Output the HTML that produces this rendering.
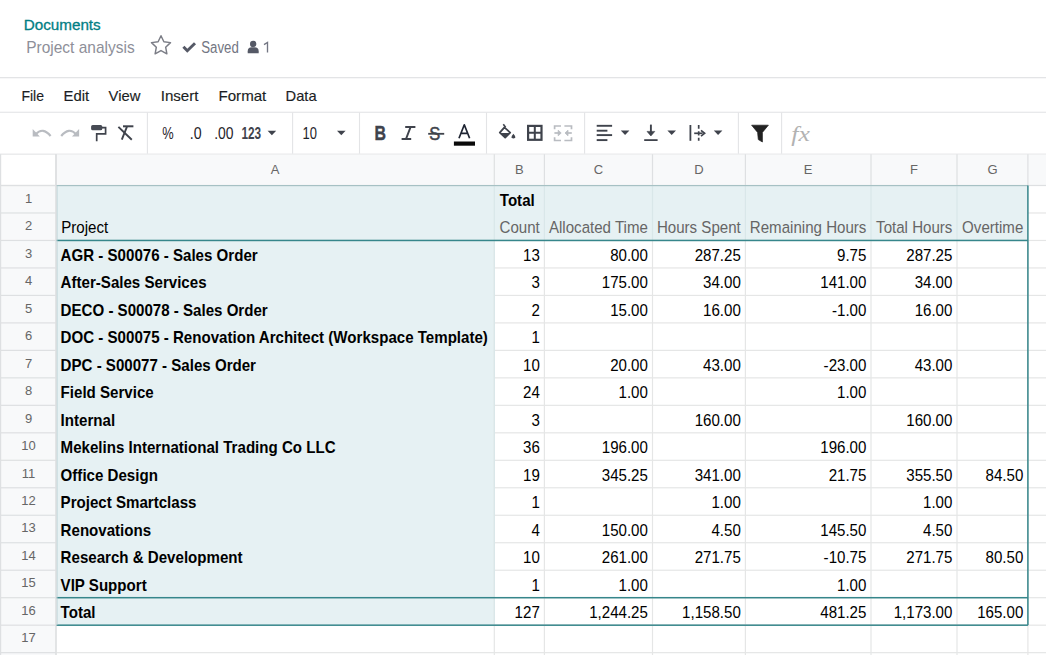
<!DOCTYPE html>
<html><head><meta charset="utf-8"><title>Project analysis</title>
<style>html,body{margin:0;padding:0;background:#fff;}body{width:1046px;height:655px;overflow:hidden;position:relative;}</style>
</head><body>
<svg width="1046" height="655" viewBox="0 0 1046 655" style="position:absolute;left:0;top:0;font-family:'Liberation Sans', sans-serif">
<rect x="0" y="0" width="1046" height="655" fill="#fff"/>
<text x="23.7" y="30.4" font-size="14.6" font-weight="400" fill="#017e84" stroke="#017e84" stroke-width="0.3" textLength="77" lengthAdjust="spacingAndGlyphs">Documents</text>
<text x="26.2" y="52.6" font-size="17" fill="#8e8f99" textLength="108.5" lengthAdjust="spacingAndGlyphs">Project analysis</text>
<polygon points="161.00,35.70 163.88,41.74 170.51,42.61 165.66,47.21 166.88,53.79 161.00,50.60 155.12,53.79 156.34,47.21 151.49,42.61 158.12,41.74" fill="none" stroke="#7b7d86" stroke-width="1.45" stroke-linejoin="round"/>
<path d="M183.4 46.7 L187.3 50.8 L195.0 43.2" fill="none" stroke="#555966" stroke-width="2.9"/>
<text x="201.2" y="52.6" font-size="15.6" fill="#737683" textLength="37.6" lengthAdjust="spacingAndGlyphs">Saved</text>
<circle cx="253.2" cy="43.9" r="3.2" fill="#555966"/>
<path d="M247.7 53.2 L247.7 51.2 Q247.7 47.3 251.8 47.3 L254.5 47.3 Q258.7 47.3 258.7 51.2 L258.7 53.2 Z" fill="#555966"/>
<path d="M264.0 44.6 L267.5 42.5 L267.5 52.6" fill="none" stroke="#737683" stroke-width="1.35" stroke-linejoin="miter"/>
<rect x="0" y="77" width="1046" height="1.3" fill="#e3e4e6"/>
<text x="21.4" y="100.7" font-size="15" fill="#1b1e24" stroke="#1b1e24" stroke-width="0.15" textLength="22.6" lengthAdjust="spacingAndGlyphs">File</text>
<text x="63.6" y="100.7" font-size="15" fill="#1b1e24" stroke="#1b1e24" stroke-width="0.15" textLength="25.6" lengthAdjust="spacingAndGlyphs">Edit</text>
<text x="108.6" y="100.7" font-size="15" fill="#1b1e24" stroke="#1b1e24" stroke-width="0.15" textLength="31.8" lengthAdjust="spacingAndGlyphs">View</text>
<text x="160.7" y="100.7" font-size="15" fill="#1b1e24" stroke="#1b1e24" stroke-width="0.15" textLength="37.8" lengthAdjust="spacingAndGlyphs">Insert</text>
<text x="218.5" y="100.7" font-size="15" fill="#1b1e24" stroke="#1b1e24" stroke-width="0.15" textLength="47.8" lengthAdjust="spacingAndGlyphs">Format</text>
<text x="285.6" y="100.7" font-size="15" fill="#1b1e24" stroke="#1b1e24" stroke-width="0.15" textLength="31" lengthAdjust="spacingAndGlyphs">Data</text>
<rect x="0" y="111.7" width="1046" height="1.1" fill="#e3e4e6"/>
<rect x="0" y="153.6" width="1046" height="1.1" fill="#e3e4e6"/>
<rect x="146.85" y="112.5" width="1.1" height="41.2" fill="#e3e4e6"/>
<rect x="292.05" y="112.5" width="1.1" height="41.2" fill="#e3e4e6"/>
<rect x="358.95" y="112.5" width="1.1" height="41.2" fill="#e3e4e6"/>
<rect x="485.95" y="112.5" width="1.1" height="41.2" fill="#e3e4e6"/>
<rect x="584.0500000000001" y="112.5" width="1.1" height="41.2" fill="#e3e4e6"/>
<rect x="737.85" y="112.5" width="1.1" height="41.2" fill="#e3e4e6"/>
<rect x="781.0500000000001" y="112.5" width="1.1" height="41.2" fill="#e3e4e6"/>
<path d="M32.7 129 L32.7 136.4 L39.8 136.4 Z" fill="#b9bcc1"/>
<path d="M35.6 134.2 Q43 126.5 50.6 136" fill="none" stroke="#b9bcc1" stroke-width="2.2"/>
<path d="M79.1 129 L79.1 136.4 L72 136.4 Z" fill="#b9bcc1"/>
<path d="M76.2 134.2 Q68.8 126.5 61.2 136" fill="none" stroke="#b9bcc1" stroke-width="2.2"/>
<rect x="91.1" y="125.1" width="11.2" height="5.2" rx="1.6" fill="#474b54"/>
<path d="M102 127.6 L105.6 127.6 L105.6 133.8 L96.7 133.8 L96.7 141.3" fill="none" stroke="#3f434c" stroke-width="1.7"/>
<path d="M123 126.3 L133.4 126.3" stroke="#3f434c" stroke-width="2"/>
<path d="M126.9 126.8 L121.8 139.6" stroke="#3f434c" stroke-width="1.9"/>
<path d="M118.4 126.9 L131.8 139.8" stroke="#3f434c" stroke-width="1.9"/>
<text x="162.2" y="139.1" font-size="15.8" fill="#1f2329" textLength="11.4" lengthAdjust="spacingAndGlyphs">%</text>
<text x="189.8" y="139.1" font-size="15.8" fill="#1f2329" textLength="11.8" lengthAdjust="spacingAndGlyphs">.0</text>
<text x="214.2" y="139.1" font-size="15.8" fill="#1f2329" textLength="19.3" lengthAdjust="spacingAndGlyphs">.00</text>
<text transform="translate(241.4,138.7) scale(1,1.08)" font-size="15" font-weight="700" fill="#3f434c" textLength="19.7" lengthAdjust="spacingAndGlyphs">123</text>
<path d="M267.6 130.8 L276.20000000000005 130.8 L271.90000000000003 135.20000000000002 Z" fill="#3f434c"/>
<text x="302.6" y="139.1" font-size="15.8" fill="#1f2329" textLength="14.4" lengthAdjust="spacingAndGlyphs">10</text>
<path d="M337.0 130.8 L345.6 130.8 L341.3 135.20000000000002 Z" fill="#3f434c"/>
<text transform="translate(374.6,140.1) scale(1,1.2)" font-size="16.2" font-weight="700" fill="#3f434c" stroke="#3f434c" stroke-width="0.35" textLength="11.5" lengthAdjust="spacingAndGlyphs">B</text>
<path d="M405.2 127 L415.4 127 M401.6 139 L411.2 139 M410.6 127 L406.0 139" stroke="#3f434c" stroke-width="2"/>
<text transform="translate(429.2,140.1) scale(1,1.18)" font-size="15.5" fill="#3f434c" stroke="#3f434c" stroke-width="0.45" textLength="11" lengthAdjust="spacingAndGlyphs">S</text>
<rect x="428.2" y="132.9" width="16" height="1.8" fill="#3f434c"/>
<path d="M459.0 138.3 L464.3 124.8 L469.6 138.3 M461.6 133.3 L467.0 133.3" fill="none" stroke="#1f2533" stroke-width="1.7" stroke-linejoin="round"/>
<rect x="453.9" y="141.5" width="21.1" height="4.2" fill="#0a0a0a"/>
<path d="M503.3 124.2 L505.6 127.2" stroke="#3f434c" stroke-width="1.6"/>
<path d="M504.4 127.4 L510.2 132.6 L505.2 137.6 L499.8 132.6 Z" fill="none" stroke="#3f434c" stroke-width="1.8" stroke-linejoin="round"/>
<path d="M500.2 132.9 L510 132.9 L505.2 137.4 Z" fill="#3f434c"/>
<path d="M513.4 133.8 Q511.3 136.2 511.6 137.2 Q512.2 138.6 513.4 138.6 Q514.6 138.6 515.2 137.2 Q515.5 136.2 513.4 133.8 Z" fill="#3f434c"/>
<rect x="528.1" y="125.9" width="13.4" height="13.9" fill="none" stroke="#3f434c" stroke-width="2.2"/>
<path d="M534.8 125.9 L534.8 139.8 M528.1 132.85 L541.5 132.85" stroke="#3f434c" stroke-width="2"/>
<path d="M554.6 129.2 L554.6 126.0 L561 126.0 M564.4 126.0 L571.5 126.0 L571.5 129.2 M554.6 137.2 L554.6 140.5 L561 140.5 M564.4 140.5 L571.5 140.5 L571.5 137.2" fill="none" stroke="#b9bcc1" stroke-width="1.7"/>
<path d="M554.4 133.0 L559 133.0" stroke="#b9bcc1" stroke-width="1.7"/>
<path d="M558.2 130.2 L561.2 133.0 L558.2 135.8 Z" fill="#b9bcc1" stroke="#b9bcc1" stroke-width="0.8"/>
<path d="M571.8 133.0 L567.2 133.0" stroke="#b9bcc1" stroke-width="1.7"/>
<path d="M568.0 130.2 L565.0 133.0 L568.0 135.8 Z" fill="#b9bcc1" stroke="#b9bcc1" stroke-width="0.8"/>
<rect x="596.7" y="124.85" width="15.4" height="1.9" fill="#3f434c"/>
<rect x="596.7" y="129.75" width="10.7" height="1.9" fill="#3f434c"/>
<rect x="596.7" y="134.15" width="15.4" height="1.9" fill="#3f434c"/>
<rect x="596.7" y="139.15" width="10.7" height="1.9" fill="#3f434c"/>
<path d="M620.8 130.6 L629.4 130.6 L625.0999999999999 135.0 Z" fill="#3f434c"/>
<path d="M650.9 124.6 L650.9 132" stroke="#3f434c" stroke-width="1.9"/>
<path d="M647.0 131.4 L654.8 131.4 L650.9 136.0 Z" fill="#3f434c" stroke="#3f434c" stroke-width="0.6" stroke-linejoin="round"/>
<rect x="644.2" y="139.2" width="13.4" height="1.8" fill="#3f434c"/>
<path d="M667.4 130.6 L676.0 130.6 L671.6999999999999 135.0 Z" fill="#3f434c"/>
<path d="M690.4 125 L690.4 140.8" stroke="#3f434c" stroke-width="1.8"/>
<path d="M698.7 125 L698.7 128.8 M698.7 131.2 L698.7 135.6 M698.7 137.8 L698.7 140.8" stroke="#3f434c" stroke-width="1.7"/>
<path d="M694.2 133.3 L702.6 133.3" stroke="#3f434c" stroke-width="1.7"/>
<path d="M701.0 130.4 L704.6 133.3 L701.0 136.2" fill="none" stroke="#3f434c" stroke-width="1.7"/>
<path d="M713.8 130.6 L722.4 130.6 L718.0999999999999 135.0 Z" fill="#3f434c"/>
<path d="M751.6 125.2 L768.4 125.2 L762.4 132.4 L762.4 142.0 L758.3 139.6 L757.6 132.4 Z" fill="#222" stroke="#222" stroke-width="0.7" stroke-linejoin="round"/>
<text x="791.3" y="140.8" font-family="Liberation Serif" font-style="italic" font-size="20" fill="#b2b2b2" textLength="18.5" lengthAdjust="spacingAndGlyphs">fx</text>
<rect x="56" y="154.7" width="990" height="30.80000000000001" fill="#f8f9fa"/>
<rect x="0" y="185.5" width="56" height="469.5" fill="#f8f9fa"/>
<rect x="56" y="185.5" width="971.9000000000001" height="54.96" fill="#e6f1f3"/>
<rect x="56" y="240.46" width="438.3" height="384.72" fill="#e6f1f3"/>
<rect x="56" y="597.7" width="438.3" height="27.48" fill="#e6f1f3"/>
<rect x="55.4" y="154.2" width="1.2" height="31.30000000000001" fill="#dee0e2"/>
<rect x="493.7" y="154.2" width="1.2" height="31.30000000000001" fill="#dee0e2"/>
<rect x="543.8" y="154.2" width="1.2" height="31.30000000000001" fill="#dee0e2"/>
<rect x="651.9" y="154.2" width="1.2" height="31.30000000000001" fill="#dee0e2"/>
<rect x="744.8" y="154.2" width="1.2" height="31.30000000000001" fill="#dee0e2"/>
<rect x="870.4" y="154.2" width="1.2" height="31.30000000000001" fill="#dee0e2"/>
<rect x="956.4" y="154.2" width="1.2" height="31.30000000000001" fill="#dee0e2"/>
<rect x="1027.3000000000002" y="154.2" width="1.2" height="31.30000000000001" fill="#dee0e2"/>
<rect x="1127.3000000000002" y="154.2" width="1.2" height="31.30000000000001" fill="#dee0e2"/>
<rect x="0" y="184.9" width="1046" height="1.2" fill="#dee0e2"/>
<rect x="0" y="184.9" width="56" height="1.2" fill="#dee0e2"/>
<rect x="0" y="212.38" width="56" height="1.2" fill="#dee0e2"/>
<rect x="0" y="239.86" width="56" height="1.2" fill="#dee0e2"/>
<rect x="0" y="267.34" width="56" height="1.2" fill="#dee0e2"/>
<rect x="0" y="294.82" width="56" height="1.2" fill="#dee0e2"/>
<rect x="0" y="322.29999999999995" width="56" height="1.2" fill="#dee0e2"/>
<rect x="0" y="349.78" width="56" height="1.2" fill="#dee0e2"/>
<rect x="0" y="377.26" width="56" height="1.2" fill="#dee0e2"/>
<rect x="0" y="404.74" width="56" height="1.2" fill="#dee0e2"/>
<rect x="0" y="432.21999999999997" width="56" height="1.2" fill="#dee0e2"/>
<rect x="0" y="459.7" width="56" height="1.2" fill="#dee0e2"/>
<rect x="0" y="487.18" width="56" height="1.2" fill="#dee0e2"/>
<rect x="0" y="514.66" width="56" height="1.2" fill="#dee0e2"/>
<rect x="0" y="542.14" width="56" height="1.2" fill="#dee0e2"/>
<rect x="0" y="569.62" width="56" height="1.2" fill="#dee0e2"/>
<rect x="0" y="597.1" width="56" height="1.2" fill="#dee0e2"/>
<rect x="0" y="624.58" width="56" height="1.2" fill="#dee0e2"/>
<rect x="0" y="652.0600000000001" width="56" height="1.2" fill="#dee0e2"/>
<rect x="0" y="154.2" width="1.2" height="500.8" fill="#dee0e2"/>
<rect x="55.4" y="154.2" width="1.2" height="500.8" fill="#dee0e2"/>
<rect x="1027.9" y="212.38" width="18.09999999999991" height="1.2" fill="#e5e6e6"/>
<rect x="494.3" y="239.86" width="551.7" height="1.2" fill="#e5e6e6"/>
<rect x="494.3" y="267.34" width="551.7" height="1.2" fill="#e5e6e6"/>
<rect x="494.3" y="294.82" width="551.7" height="1.2" fill="#e5e6e6"/>
<rect x="494.3" y="322.29999999999995" width="551.7" height="1.2" fill="#e5e6e6"/>
<rect x="494.3" y="349.78" width="551.7" height="1.2" fill="#e5e6e6"/>
<rect x="494.3" y="377.26" width="551.7" height="1.2" fill="#e5e6e6"/>
<rect x="494.3" y="404.74" width="551.7" height="1.2" fill="#e5e6e6"/>
<rect x="494.3" y="432.21999999999997" width="551.7" height="1.2" fill="#e5e6e6"/>
<rect x="494.3" y="459.7" width="551.7" height="1.2" fill="#e5e6e6"/>
<rect x="494.3" y="487.18" width="551.7" height="1.2" fill="#e5e6e6"/>
<rect x="494.3" y="514.66" width="551.7" height="1.2" fill="#e5e6e6"/>
<rect x="494.3" y="542.14" width="551.7" height="1.2" fill="#e5e6e6"/>
<rect x="494.3" y="569.62" width="551.7" height="1.2" fill="#e5e6e6"/>
<rect x="494.3" y="597.1" width="551.7" height="1.2" fill="#e5e6e6"/>
<rect x="494.3" y="624.58" width="551.7" height="1.2" fill="#e5e6e6"/>
<rect x="56" y="652.0600000000001" width="990" height="1.2" fill="#e5e6e6"/>
<rect x="493.7" y="240.46" width="1.2" height="414.53999999999996" fill="#e5e6e6"/>
<rect x="543.8" y="240.46" width="1.2" height="414.53999999999996" fill="#e5e6e6"/>
<rect x="651.9" y="240.46" width="1.2" height="414.53999999999996" fill="#e5e6e6"/>
<rect x="744.8" y="240.46" width="1.2" height="414.53999999999996" fill="#e5e6e6"/>
<rect x="870.4" y="240.46" width="1.2" height="414.53999999999996" fill="#e5e6e6"/>
<rect x="956.4" y="240.46" width="1.2" height="414.53999999999996" fill="#e5e6e6"/>
<rect x="1027.3000000000002" y="240.46" width="1.2" height="414.53999999999996" fill="#e5e6e6"/>
<rect x="1127.3000000000002" y="185.5" width="1.2" height="469.5" fill="#e5e6e6"/>
<rect x="493.7" y="185.5" width="1.2" height="54.96" fill="#d9e7e9"/>
<rect x="543.8" y="185.5" width="1.2" height="54.96" fill="#d9e7e9"/>
<rect x="651.9" y="185.5" width="1.2" height="54.96" fill="#d9e7e9"/>
<rect x="744.8" y="185.5" width="1.2" height="54.96" fill="#d9e7e9"/>
<rect x="870.4" y="185.5" width="1.2" height="54.96" fill="#d9e7e9"/>
<rect x="956.4" y="185.5" width="1.2" height="54.96" fill="#d9e7e9"/>
<rect x="493.7" y="240.46" width="1.2" height="384.72" fill="#d9e7e9"/>
<rect x="56" y="185.04999999999998" width="971.9000000000001" height="1.1" fill="#a3bfc3"/>
<rect x="56" y="239.71" width="971.9000000000001" height="1.5" fill="#36868b"/>
<rect x="56" y="596.95" width="971.9000000000001" height="1.5" fill="#36868b"/>
<rect x="56" y="624.4300000000001" width="971.9000000000001" height="1.5" fill="#36868b"/>
<rect x="56.55" y="185.5" width="0.9" height="439.68000000000006" fill="#b5cfd2"/>
<rect x="1027.15" y="185.5" width="1.5" height="439.68000000000006" fill="#36868b"/>
<rect x="55.4" y="154.2" width="1.2" height="500.8" fill="#dee0e2"/>
<text x="275.15" y="174.2" font-size="13" fill="#666" text-anchor="middle">A</text>
<text x="519.35" y="174.2" font-size="13" fill="#666" text-anchor="middle">B</text>
<text x="598.45" y="174.2" font-size="13" fill="#666" text-anchor="middle">C</text>
<text x="698.95" y="174.2" font-size="13" fill="#666" text-anchor="middle">D</text>
<text x="808.2" y="174.2" font-size="13" fill="#666" text-anchor="middle">E</text>
<text x="914.0" y="174.2" font-size="13" fill="#666" text-anchor="middle">F</text>
<text x="992.45" y="174.2" font-size="13" fill="#666" text-anchor="middle">G</text>
<text x="1077.9" y="174.2" font-size="13" fill="#666" text-anchor="middle">H</text>
<text x="28.5" y="202.7" font-size="13" fill="#666" text-anchor="middle">1</text>
<text x="28.5" y="230.17999999999998" font-size="13" fill="#666" text-anchor="middle">2</text>
<text x="28.5" y="257.66" font-size="13" fill="#666" text-anchor="middle">3</text>
<text x="28.5" y="285.14" font-size="13" fill="#666" text-anchor="middle">4</text>
<text x="28.5" y="312.62" font-size="13" fill="#666" text-anchor="middle">5</text>
<text x="28.5" y="340.09999999999997" font-size="13" fill="#666" text-anchor="middle">6</text>
<text x="28.5" y="367.58" font-size="13" fill="#666" text-anchor="middle">7</text>
<text x="28.5" y="395.06" font-size="13" fill="#666" text-anchor="middle">8</text>
<text x="28.5" y="422.54" font-size="13" fill="#666" text-anchor="middle">9</text>
<text x="28.5" y="450.02" font-size="13" fill="#666" text-anchor="middle">10</text>
<text x="28.5" y="477.5" font-size="13" fill="#666" text-anchor="middle">11</text>
<text x="28.5" y="504.98" font-size="13" fill="#666" text-anchor="middle">12</text>
<text x="28.5" y="532.46" font-size="13" fill="#666" text-anchor="middle">13</text>
<text x="28.5" y="559.94" font-size="13" fill="#666" text-anchor="middle">14</text>
<text x="28.5" y="587.4200000000001" font-size="13" fill="#666" text-anchor="middle">15</text>
<text x="28.5" y="614.9000000000001" font-size="13" fill="#666" text-anchor="middle">16</text>
<text x="28.5" y="642.3800000000001" font-size="13" fill="#666" text-anchor="middle">17</text>
<text transform="translate(499.80,205.85) scale(1,1.05)" font-size="15.1" fill="#000" font-weight="700">Total</text>
<text transform="translate(61.20,233.33) scale(1,1.05)" font-size="15.1" fill="#000">Project</text>
<text transform="translate(539.80,233.33) scale(1,1.05)" font-size="15.1" fill="#666" text-anchor="end">Count</text>
<text transform="translate(647.90,233.33) scale(1,1.05)" font-size="15.1" fill="#666" text-anchor="end">Allocated Time</text>
<text transform="translate(740.80,233.33) scale(1,1.05)" font-size="15.1" fill="#666" text-anchor="end">Hours Spent</text>
<text transform="translate(866.40,233.33) scale(1,1.05)" font-size="15.1" fill="#666" text-anchor="end">Remaining Hours</text>
<text transform="translate(952.40,233.33) scale(1,1.05)" font-size="15.1" fill="#666" text-anchor="end">Total Hours</text>
<text transform="translate(1023.30,233.33) scale(1,1.05)" font-size="15.1" fill="#666" text-anchor="end">Overtime</text>
<text transform="translate(60.60,260.81) scale(1,1.05)" font-size="15.1" fill="#000" font-weight="700">AGR - S00076 - Sales Order</text>
<text transform="translate(539.80,260.81) scale(1,1.05)" font-size="15.1" fill="#000" text-anchor="end">13</text>
<text transform="translate(647.90,260.81) scale(1,1.05)" font-size="15.1" fill="#000" text-anchor="end">80.00</text>
<text transform="translate(740.80,260.81) scale(1,1.05)" font-size="15.1" fill="#000" text-anchor="end">287.25</text>
<text transform="translate(866.40,260.81) scale(1,1.05)" font-size="15.1" fill="#000" text-anchor="end">9.75</text>
<text transform="translate(952.40,260.81) scale(1,1.05)" font-size="15.1" fill="#000" text-anchor="end">287.25</text>
<text transform="translate(60.60,288.29) scale(1,1.05)" font-size="15.1" fill="#000" font-weight="700">After-Sales Services</text>
<text transform="translate(539.80,288.29) scale(1,1.05)" font-size="15.1" fill="#000" text-anchor="end">3</text>
<text transform="translate(647.90,288.29) scale(1,1.05)" font-size="15.1" fill="#000" text-anchor="end">175.00</text>
<text transform="translate(740.80,288.29) scale(1,1.05)" font-size="15.1" fill="#000" text-anchor="end">34.00</text>
<text transform="translate(866.40,288.29) scale(1,1.05)" font-size="15.1" fill="#000" text-anchor="end">141.00</text>
<text transform="translate(952.40,288.29) scale(1,1.05)" font-size="15.1" fill="#000" text-anchor="end">34.00</text>
<text transform="translate(60.60,315.77) scale(1,1.05)" font-size="15.1" fill="#000" font-weight="700">DECO - S00078 - Sales Order</text>
<text transform="translate(539.80,315.77) scale(1,1.05)" font-size="15.1" fill="#000" text-anchor="end">2</text>
<text transform="translate(647.90,315.77) scale(1,1.05)" font-size="15.1" fill="#000" text-anchor="end">15.00</text>
<text transform="translate(740.80,315.77) scale(1,1.05)" font-size="15.1" fill="#000" text-anchor="end">16.00</text>
<text transform="translate(866.40,315.77) scale(1,1.05)" font-size="15.1" fill="#000" text-anchor="end">-1.00</text>
<text transform="translate(952.40,315.77) scale(1,1.05)" font-size="15.1" fill="#000" text-anchor="end">16.00</text>
<text transform="translate(60.60,343.25) scale(1,1.05)" font-size="15.1" fill="#000" font-weight="700">DOC - S00075 - Renovation Architect (Workspace Template)</text>
<text transform="translate(539.80,343.25) scale(1,1.05)" font-size="15.1" fill="#000" text-anchor="end">1</text>
<text transform="translate(60.60,370.73) scale(1,1.05)" font-size="15.1" fill="#000" font-weight="700">DPC - S00077 - Sales Order</text>
<text transform="translate(539.80,370.73) scale(1,1.05)" font-size="15.1" fill="#000" text-anchor="end">10</text>
<text transform="translate(647.90,370.73) scale(1,1.05)" font-size="15.1" fill="#000" text-anchor="end">20.00</text>
<text transform="translate(740.80,370.73) scale(1,1.05)" font-size="15.1" fill="#000" text-anchor="end">43.00</text>
<text transform="translate(866.40,370.73) scale(1,1.05)" font-size="15.1" fill="#000" text-anchor="end">-23.00</text>
<text transform="translate(952.40,370.73) scale(1,1.05)" font-size="15.1" fill="#000" text-anchor="end">43.00</text>
<text transform="translate(60.60,398.21) scale(1,1.05)" font-size="15.1" fill="#000" font-weight="700">Field Service</text>
<text transform="translate(539.80,398.21) scale(1,1.05)" font-size="15.1" fill="#000" text-anchor="end">24</text>
<text transform="translate(647.90,398.21) scale(1,1.05)" font-size="15.1" fill="#000" text-anchor="end">1.00</text>
<text transform="translate(866.40,398.21) scale(1,1.05)" font-size="15.1" fill="#000" text-anchor="end">1.00</text>
<text transform="translate(60.60,425.69) scale(1,1.05)" font-size="15.1" fill="#000" font-weight="700">Internal</text>
<text transform="translate(539.80,425.69) scale(1,1.05)" font-size="15.1" fill="#000" text-anchor="end">3</text>
<text transform="translate(740.80,425.69) scale(1,1.05)" font-size="15.1" fill="#000" text-anchor="end">160.00</text>
<text transform="translate(952.40,425.69) scale(1,1.05)" font-size="15.1" fill="#000" text-anchor="end">160.00</text>
<text transform="translate(60.60,453.17) scale(1,1.05)" font-size="15.1" fill="#000" font-weight="700">Mekelins International Trading Co LLC</text>
<text transform="translate(539.80,453.17) scale(1,1.05)" font-size="15.1" fill="#000" text-anchor="end">36</text>
<text transform="translate(647.90,453.17) scale(1,1.05)" font-size="15.1" fill="#000" text-anchor="end">196.00</text>
<text transform="translate(866.40,453.17) scale(1,1.05)" font-size="15.1" fill="#000" text-anchor="end">196.00</text>
<text transform="translate(60.60,480.65) scale(1,1.05)" font-size="15.1" fill="#000" font-weight="700">Office Design</text>
<text transform="translate(539.80,480.65) scale(1,1.05)" font-size="15.1" fill="#000" text-anchor="end">19</text>
<text transform="translate(647.90,480.65) scale(1,1.05)" font-size="15.1" fill="#000" text-anchor="end">345.25</text>
<text transform="translate(740.80,480.65) scale(1,1.05)" font-size="15.1" fill="#000" text-anchor="end">341.00</text>
<text transform="translate(866.40,480.65) scale(1,1.05)" font-size="15.1" fill="#000" text-anchor="end">21.75</text>
<text transform="translate(952.40,480.65) scale(1,1.05)" font-size="15.1" fill="#000" text-anchor="end">355.50</text>
<text transform="translate(1023.30,480.65) scale(1,1.05)" font-size="15.1" fill="#000" text-anchor="end">84.50</text>
<text transform="translate(60.60,508.13) scale(1,1.05)" font-size="15.1" fill="#000" font-weight="700">Project Smartclass</text>
<text transform="translate(539.80,508.13) scale(1,1.05)" font-size="15.1" fill="#000" text-anchor="end">1</text>
<text transform="translate(740.80,508.13) scale(1,1.05)" font-size="15.1" fill="#000" text-anchor="end">1.00</text>
<text transform="translate(952.40,508.13) scale(1,1.05)" font-size="15.1" fill="#000" text-anchor="end">1.00</text>
<text transform="translate(60.60,535.61) scale(1,1.05)" font-size="15.1" fill="#000" font-weight="700">Renovations</text>
<text transform="translate(539.80,535.61) scale(1,1.05)" font-size="15.1" fill="#000" text-anchor="end">4</text>
<text transform="translate(647.90,535.61) scale(1,1.05)" font-size="15.1" fill="#000" text-anchor="end">150.00</text>
<text transform="translate(740.80,535.61) scale(1,1.05)" font-size="15.1" fill="#000" text-anchor="end">4.50</text>
<text transform="translate(866.40,535.61) scale(1,1.05)" font-size="15.1" fill="#000" text-anchor="end">145.50</text>
<text transform="translate(952.40,535.61) scale(1,1.05)" font-size="15.1" fill="#000" text-anchor="end">4.50</text>
<text transform="translate(60.60,563.09) scale(1,1.05)" font-size="15.1" fill="#000" font-weight="700">Research &amp; Development</text>
<text transform="translate(539.80,563.09) scale(1,1.05)" font-size="15.1" fill="#000" text-anchor="end">10</text>
<text transform="translate(647.90,563.09) scale(1,1.05)" font-size="15.1" fill="#000" text-anchor="end">261.00</text>
<text transform="translate(740.80,563.09) scale(1,1.05)" font-size="15.1" fill="#000" text-anchor="end">271.75</text>
<text transform="translate(866.40,563.09) scale(1,1.05)" font-size="15.1" fill="#000" text-anchor="end">-10.75</text>
<text transform="translate(952.40,563.09) scale(1,1.05)" font-size="15.1" fill="#000" text-anchor="end">271.75</text>
<text transform="translate(1023.30,563.09) scale(1,1.05)" font-size="15.1" fill="#000" text-anchor="end">80.50</text>
<text transform="translate(60.60,590.57) scale(1,1.05)" font-size="15.1" fill="#000" font-weight="700">VIP Support</text>
<text transform="translate(539.80,590.57) scale(1,1.05)" font-size="15.1" fill="#000" text-anchor="end">1</text>
<text transform="translate(647.90,590.57) scale(1,1.05)" font-size="15.1" fill="#000" text-anchor="end">1.00</text>
<text transform="translate(866.40,590.57) scale(1,1.05)" font-size="15.1" fill="#000" text-anchor="end">1.00</text>
<text transform="translate(60.60,618.05) scale(1,1.05)" font-size="15.1" fill="#000" font-weight="700">Total</text>
<text transform="translate(539.80,618.05) scale(1,1.05)" font-size="15.1" fill="#000" text-anchor="end">127</text>
<text transform="translate(647.90,618.05) scale(1,1.05)" font-size="15.1" fill="#000" text-anchor="end">1,244.25</text>
<text transform="translate(740.80,618.05) scale(1,1.05)" font-size="15.1" fill="#000" text-anchor="end">1,158.50</text>
<text transform="translate(866.40,618.05) scale(1,1.05)" font-size="15.1" fill="#000" text-anchor="end">481.25</text>
<text transform="translate(952.40,618.05) scale(1,1.05)" font-size="15.1" fill="#000" text-anchor="end">1,173.00</text>
<text transform="translate(1023.30,618.05) scale(1,1.05)" font-size="15.1" fill="#000" text-anchor="end">165.00</text>
</svg>
</body></html>
